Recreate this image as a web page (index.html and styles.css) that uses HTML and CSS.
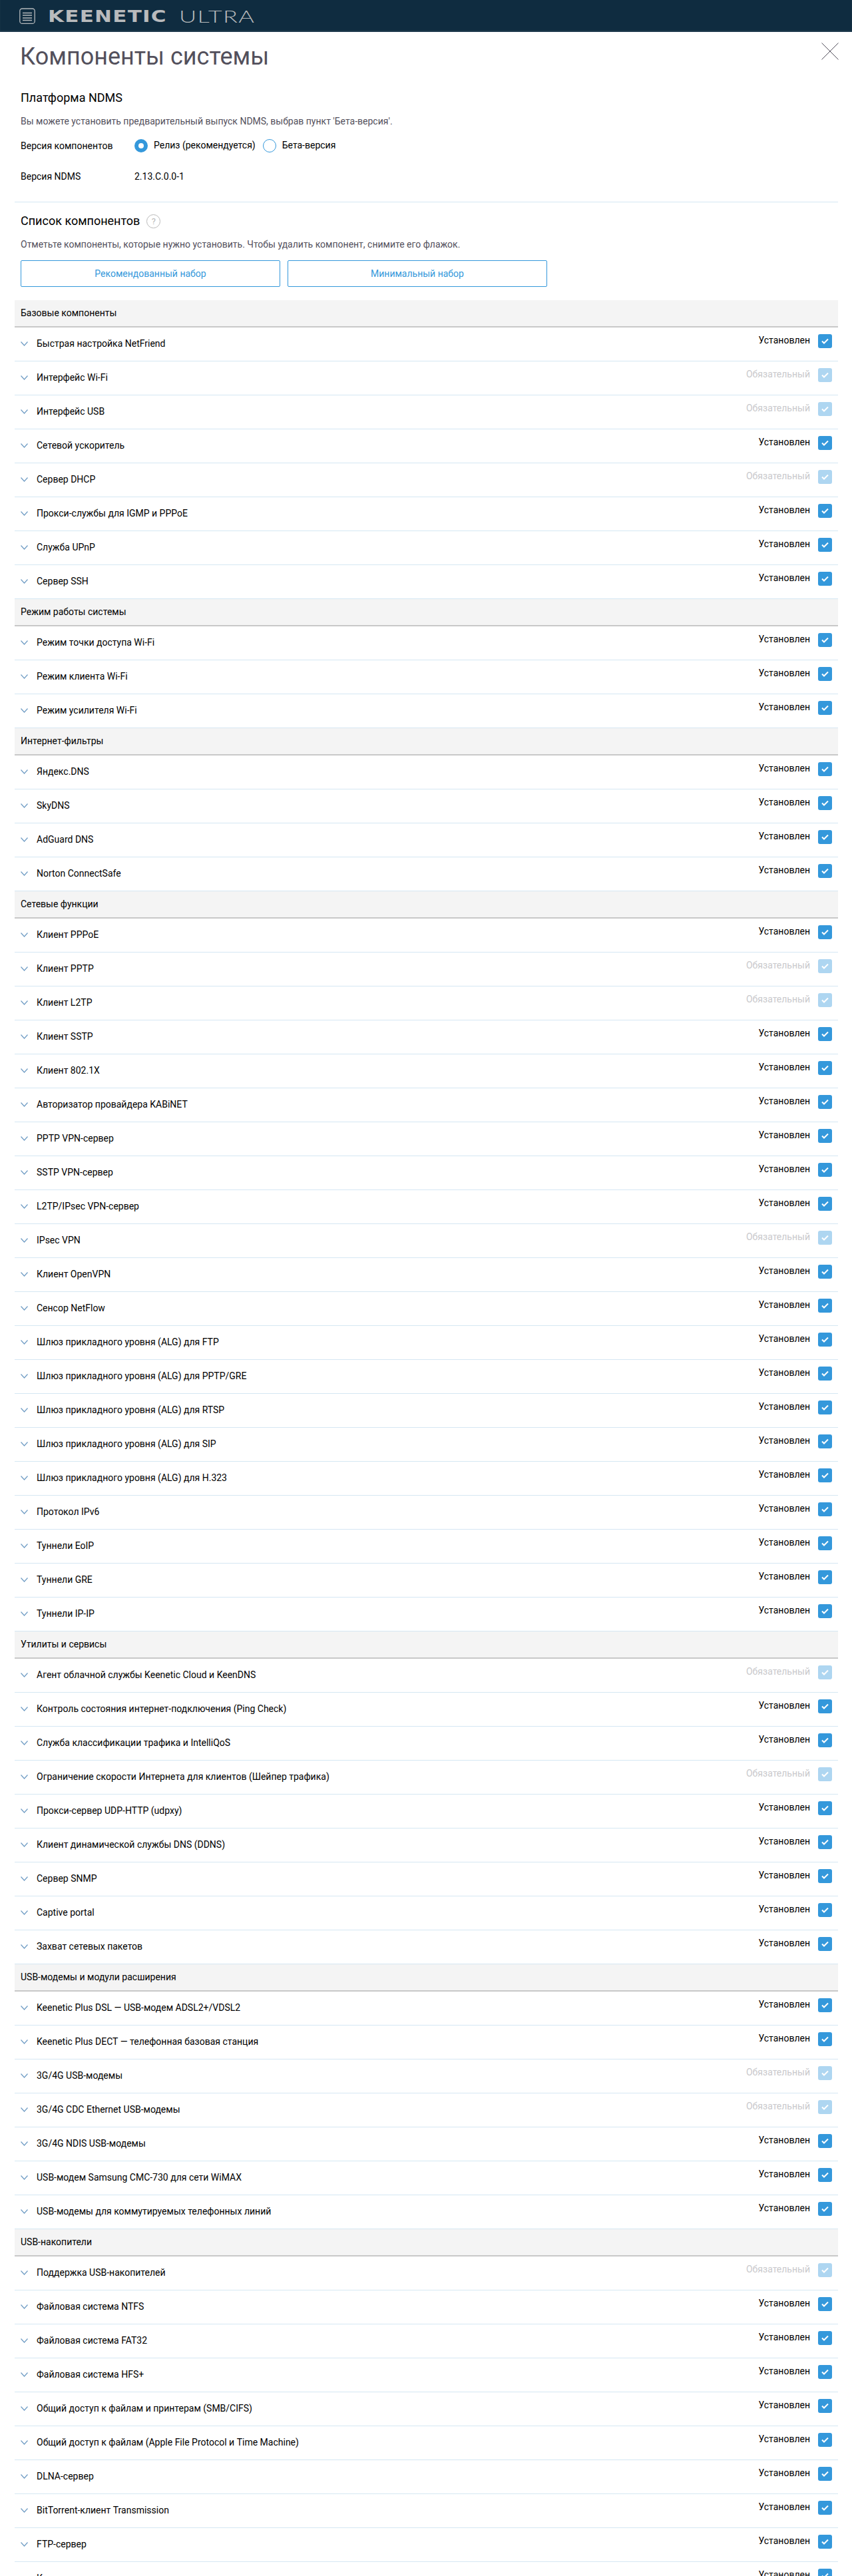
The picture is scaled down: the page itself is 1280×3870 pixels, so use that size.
FILE: index.html
```html
<!DOCTYPE html>
<html lang="ru">
<head>
  <meta charset="UTF-8">
  <title>Компоненты системы</title>
  <link rel="stylesheet" href="styles.css">
</head>
<body>

  <header class="topbar">
    <svg class="menu-icon" width="24" height="24" viewBox="0 0 24 24" fill="none" stroke="#b4b8bb">
      <rect x="0.8" y="1" width="22.4" height="22.4" rx="3.5" stroke-width="1.3"/>
      <path d="M5 7.5h14M5 11h14M5 15h14M5 18.5h14" stroke-width="1.3"/>
    </svg>
    <span class="logo-main">KEENETIC</span>
    <span class="logo-sub">ULTRA</span>
  </header>

  <main class="page">
    <svg class="close" width="26" height="26" viewBox="0 0 26 26" fill="none" stroke="#53505c">
      <path d="M0.5 0.5l25 25M25.5 0.5l-25 25"/>
    </svg>

    <h1>Компоненты системы</h1>

    <!-- платформа -->
    <section class="platform">
      <h2>Платформа NDMS</h2>
      <p class="hint">Вы можете установить предварительный выпуск NDMS, выбрав пункт 'Бета-версия'.</p>
      <div class="field field-radio">
        <span class="field-name">Версия компонентов</span>
        <span class="radio radio-on"></span><span class="radio-text">Релиз (рекомендуется)</span>
        <span class="radio"></span><span class="radio-text">Бета-версия</span>
      </div>
      <div class="field field-version">
        <span class="field-name">Версия NDMS</span>
        <span>2.13.C.0.0-1</span>
      </div>
    </section>

    <section class="list-head">
      <h2>Список компонентов <span class="help">?</span></h2>
      <p class="hint">Отметьте компоненты, которые нужно установить. Чтобы удалить компонент, снимите его флажок.</p>
      <div class="presets">
        <button>Рекомендованный набор</button>
        <button>Минимальный набор</button>
      </div>
    </section>

    <div id="components" class="components"></div>
  </main>

  <script src="components.js"></script>

</body>
</html>
```

FILE: components.js
```js
// ! в начале строки = обязательный компонент
const groups = [
  ["Базовые компоненты", [
    "Быстрая настройка NetFriend", "!Интерфейс Wi-Fi", "!Интерфейс USB", "Сетевой ускоритель",
    "!Сервер DHCP", "Прокси-службы для IGMP и PPPoE", "Служба UPnP", "Сервер SSH"
  ]],
  ["Режим работы системы", [
    "Режим точки доступа Wi-Fi", "Режим клиента Wi-Fi", "Режим усилителя Wi-Fi"
  ]],
  ["Интернет-фильтры", [
    "Яндекс.DNS", "SkyDNS", "AdGuard DNS", "Norton ConnectSafe"
  ]],
  ["Сетевые функции", [
    "Клиент PPPoE", "!Клиент PPTP", "!Клиент L2TP", "Клиент SSTP", "Клиент 802.1X",
    "Авторизатор провайдера KABiNET", "PPTP VPN-сервер", "SSTP VPN-сервер", "L2TP/IPsec VPN-сервер",
    "!IPsec VPN", "Клиент OpenVPN", "Сенсор NetFlow",
    "Шлюз прикладного уровня (ALG) для FTP", "Шлюз прикладного уровня (ALG) для PPTP/GRE",
    "Шлюз прикладного уровня (ALG) для RTSP", "Шлюз прикладного уровня (ALG) для SIP",
    "Шлюз прикладного уровня (ALG) для H.323", "Протокол IPv6", "Туннели EoIP", "Туннели GRE", "Туннели IP-IP"
  ]],
  ["Утилиты и сервисы", [
    "!Агент облачной службы Keenetic Cloud и KeenDNS", "Контроль состояния интернет-подключения (Ping Check)",
    "Служба классификации трафика и IntelliQoS", "!Ограничение скорости Интернета для клиентов (Шейпер трафика)",
    "Прокси-сервер UDP-HTTP (udpxy)", "Клиент динамической службы DNS (DDNS)", "Сервер SNMP",
    "Captive portal", "Захват сетевых пакетов"
  ]],
  ["USB-модемы и модули расширения", [
    "Keenetic Plus DSL — USB-модем ADSL2+/VDSL2", "Keenetic Plus DECT — телефонная базовая станция",
    "!3G/4G USB-модемы", "!3G/4G CDC Ethernet USB-модемы", "3G/4G NDIS USB-модемы",
    "USB-модем Samsung CMC-730 для сети WiMAX", "USB-модемы для коммутируемых телефонных линий"
  ]],
  ["USB-накопители", [
    "!Поддержка USB-накопителей", "Файловая система NTFS", "Файловая система FAT32", "Файловая система HFS+",
    "Общий доступ к файлам и принтерам (SMB/CIFS)", "Общий доступ к файлам (Apple File Protocol и Time Machine)",
    "DLNA-сервер", "BitTorrent-клиент Transmission", "FTP-сервер", "Клиент"
  ]]
];

const chevron = '<svg class="chevron" width="11" height="7" viewBox="0 0 11 7" fill="none" stroke="#6f9cc4" stroke-width="1.2"><path d="M0.5 0.5l5 5.5 5-5.5"/></svg>';
const check = '<svg width="11" height="9" viewBox="0 0 11 9" fill="none" stroke="#fff" stroke-width="2"><path d="M1 4.5l3 3 6-6"/></svg>';

let html = "";
groups.forEach(function (group) {
  html += '<div class="group-title">' + group[0] + '</div>';
  group[1].forEach(function (name) {
    const required = name[0] === "!";
    html += '<div class="row' + (required ? ' row-required' : '') + '">' + chevron +
      '<span class="row-name">' + name.replace("!", "") + '</span>' +
      '<span class="row-status">' + (required ? 'Обязательный' : 'Установлен') + '</span>' +
      '<span class="checkbox">' + check + '</span></div>';
  });
});
document.getElementById("components").innerHTML = html;
```

FILE: styles.css
```css
html, body {
  height: 3870px;
  overflow: hidden;
}
body {
  margin: 0;
  font-family: Roboto, sans-serif;
  font-size: 14px;
  color: #000;
  background-color: #fff;
}

/* шапка */
.topbar {
  display: flex;
  align-items: center;
  height: 48px;
  padding-left: 29px;
  background-color: #0f2c40;
  box-shadow: inset 0 -2px 2px rgba(255, 255, 255, 0.08);
  color: #b9bbbd;
  box-sizing: border-box;
}
.menu-icon {
  flex: none;
  margin-right: 19px;
}
/* словесный знак шире обычных шрифтов, поэтому растянут по горизонтали */
.logo-main {
  flex: none;
  width: 197px;
  font-family: "DejaVu Sans", sans-serif;
  font-weight: 700;
  font-size: 25px;
  letter-spacing: 1px;
  transform: scaleX(1.24);
  transform-origin: left center;
}
.logo-sub {
  flex: none;
  font-family: Lato, sans-serif;
  font-weight: 300;
  font-size: 25px;
  letter-spacing: 1px;
  transform: scaleX(1.44);
  transform-origin: left center;
}

.page {
  position: relative;
  padding: 0 21px 0 22px;
}
.close {
  position: absolute;
  top: 16px;
  right: 20px;
}
h1 {
  margin: 0;
  padding: 12px 0 0 8px;
  font-size: 36px;
  font-weight: 400;
  line-height: 50px;
  color: #53505c;
}
h2 {
  display: flex;
  align-items: center;
  gap: 5px;
  margin: 0;
  font-size: 18px;
  font-weight: 400;
  line-height: 24px;
  height: 24px;
}
.hint {
  margin: 13px 0 0;
  color: #53505c;
  line-height: 20px;
}

.platform {
  padding: 25px 0 28px 9px;
  border-bottom: 1px solid #d5e7f3;
}
.field {
  display: flex;
  align-items: center;
  height: 20px;
}
.field-name {
  width: 171px;
}
.field-radio {
  margin-top: 17px;
}
.field-version {
  margin-top: 26px;
}
.radio {
  box-sizing: border-box;
  width: 20px;
  height: 20px;
  border: 1px solid #3498db;
  border-radius: 50%;
  margin-right: 9px;
}
.radio-on {
  border: 6px solid #3498db;
}
.radio-text {
  margin-right: 11px;
  margin-top: -2px;
}

.list-head {
  padding: 16px 0 20px 9px;
}
.help {
  box-sizing: border-box;
  width: 21px;
  height: 21px;
  margin-left: 5px;
  border: 1px solid #b9b9b9;
  border-radius: 50%;
  color: #b9b9b9;
  font-size: 13px;
  line-height: 19px;
  text-align: center;
}
.presets {
  display: flex;
  gap: 11px;
  margin-top: 14px;
}
.presets button {
  width: 390px;
  height: 40px;
  background-color: #fff;
  border: 1px solid #3498db;
  border-radius: 2px;
  color: #3498db;
  font-family: Roboto, sans-serif;
  font-size: 14px;
}

/* список компонентов */
.group-title {
  box-sizing: border-box;
  height: 41px;
  padding: 9px 0 0 9px;
  line-height: 20px;
  background-color: #f4f4f4;
  border-bottom: 2px solid #c8c8c8;
}
.row {
  display: flex;
  box-sizing: border-box;
  height: 51px;
  padding-top: 10px;
  padding-right: 9px;
  border-bottom: 1px solid #d5e7f3;
}
.chevron {
  margin: 11px 13px 0 9px;
}
.row-name {
  flex: 1;
  line-height: 20px;
  margin-top: 4px;
}
.row-status {
  margin-right: 12px;
  line-height: 20px;
  margin-top: -1px;
}
.checkbox {
  display: flex;
  align-items: center;
  justify-content: center;
  width: 21px;
  height: 21px;
  border-radius: 3px;
  background-color: #3498db;
}
.row-required .row-status {
  color: #c9c9cc;
}
.row-required .checkbox {
  background-color: #aed6f1;
}
```
